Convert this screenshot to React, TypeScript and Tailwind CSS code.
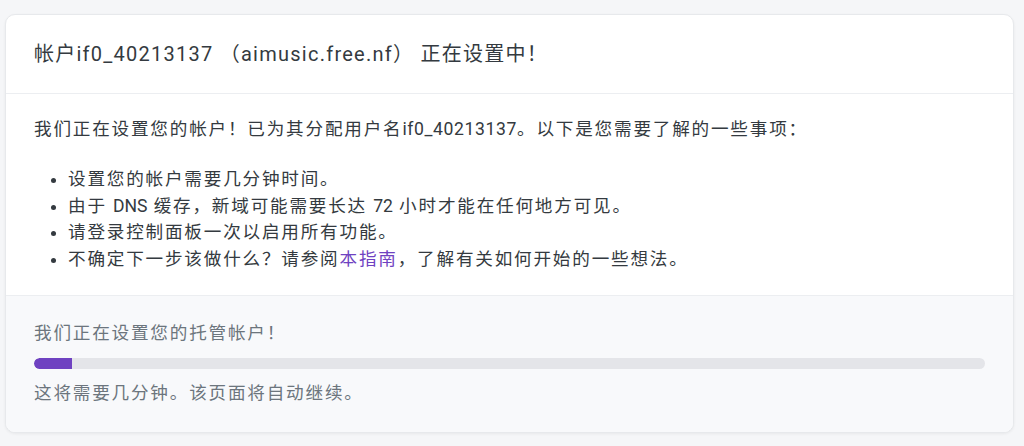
import React from 'react';

const font = { fontFamily: '"Roboto", "Noto Sans CJK SC", sans-serif' };

// latin runs keep normal spacing; CJK text is spaced a little wider
const L: React.FC<{ children: React.ReactNode }> = ({ children }) => (
  <span className="tracking-normal">{children}</span>
);

const items: React.ReactNode[] = [
  '设置您的帐户需要几分钟时间。',
  <>
    由于 <L>DNS</L> 缓存，新域可能需要长达 <L>72</L> 小时才能在任何地方可见。
  </>,
  '请登录控制面板一次以启用所有功能。',
  <>
    不确定下一步该做什么？请参阅<a href="#" className="text-[#6f42c1]">本指南</a>，了解有关如何开始的一些想法。
  </>,
];

const App: React.FC = () => {
  const progress = 4;
  return (
    <div className="min-h-[446px] bg-[#f5f6f8] pt-[14px] pl-[5px]" style={font}>
      <div className="w-[1009px] rounded-[10px] border border-[#e7e9ec] bg-white shadow-[0_1px_3px_rgba(0,0,0,0.06)] overflow-hidden">
        <div className="px-7 py-6 border-b border-[#eceef1]">
          <h1 className="text-[20px] leading-[30px] tracking-[1.25px] text-[#343a40]">
            帐户if0_40213137 （aimusic.free.nf） 正在设置中！
          </h1>
        </div>

        <div className="px-7 pt-[22px] pb-[23px] text-[17.6px] leading-[26.4px] tracking-[1.8px] text-[#343a40]">
          <p className="mb-6">
            我们正在设置您的帐户！已为其分配用户名<span className="tracking-[0.6px]">if0_40213137</span>。以下是您需要了解的一些事项：
          </p>
          <ul className="list-disc pl-[34px]">
            {items.map((it, i) => (
              <li key={i}>{it}</li>
            ))}
          </ul>
        </div>

        <div className="bg-[#f8f9fb] border-t border-[#eceef1] px-7 pt-6 pb-[25px] text-[17.6px] leading-[26.4px] tracking-[1.8px] text-[#6c757d]">
          <p>我们正在设置您的托管帐户！</p>
          <div className="mt-3 mb-[11px] h-[11px] rounded-full bg-[#e4e5e9] overflow-hidden">
            <div className="h-full rounded-l-full bg-[#6f42c1]" style={{ width: `${progress}%` }} />
          </div>
          <p>这将需要几分钟。该页面将自动继续。</p>
        </div>
      </div>
    </div>
  );
};

export default App;
